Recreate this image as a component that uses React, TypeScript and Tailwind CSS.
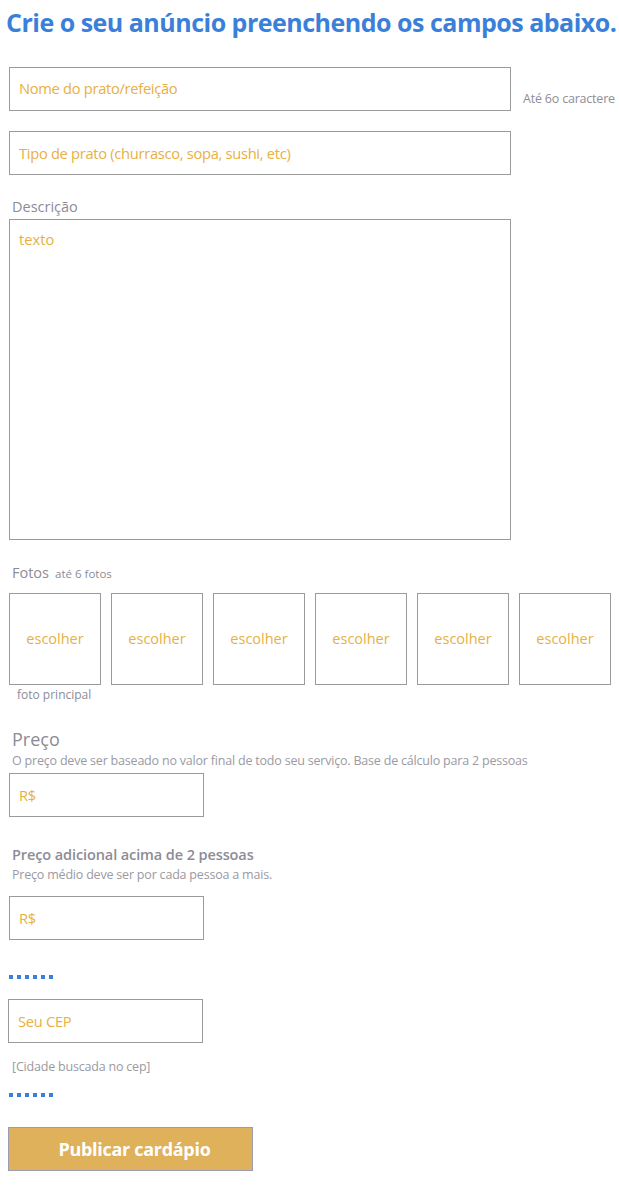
import React from 'react';

const font = { fontFamily: '"Open Sans", "Liberation Sans", sans-serif' };

const Dots: React.FC = () => (
  <div className="flex gap-1 pl-[9px]">
    {[0, 1, 2, 3, 4, 5].map((i) => (
      <div key={i} className="w-1 h-1 bg-[#3b7fd6]" />
    ))}
  </div>
);

const TextInput: React.FC<{ placeholder: string; className?: string }> = ({ placeholder, className }) => (
  <div className={`h-[44px] border border-[#9b9b9b] bg-white flex items-center px-[9px] ${className ?? ''}`}>
    <span className="text-[14.7px] text-[#e8b043] tracking-[-0.3px]">{placeholder}</span>
  </div>
);

export default function App() {
  const photos = [0, 1, 2, 3, 4, 5];

  return (
    <div className="w-[619px] min-h-[1185px] bg-white" style={font}>
      {/* Title */}
      <h1 className="pt-[6px] pl-[6px] text-[25px] font-bold text-[#3b80d8] tracking-[-0.5px] leading-[32px] whitespace-nowrap">
        Crie o seu anúncio preenchendo os campos abaixo.
      </h1>

      {/* Nome */}
      <div className="mt-[29px] flex items-end">
        <TextInput placeholder="Nome do prato/refeição" className="ml-[9px] w-[502px] items-start pt-[9px]" />
        <span className="ml-[12px] mb-[2px] text-[12.5px] text-[#8e8e98] whitespace-nowrap tracking-[-0.2px]">
          Até 6o caractere
        </span>
      </div>

      {/* Tipo */}
      <TextInput
        placeholder="Tipo de prato (churrasco, sopa, sushi, etc)"
        className="mt-[20px] ml-[9px] w-[502px]"
      />

      {/* Descrição */}
      <div className="mt-[22px] pl-[12px] text-[14.5px] text-[#8c8c96] leading-[20px]">Descrição</div>
      <div className="mt-[2px] ml-[9px] w-[502px] h-[321px] border border-[#9b9b9b] px-[9px] pt-[7px]">
        <span className="text-[14.7px] text-[#e8b043]">texto</span>
      </div>

      {/* Fotos */}
      <div className="mt-[23px] pl-[12px] flex items-baseline gap-[6px] leading-[20px]">
        <span className="text-[14.5px] text-[#8c8c96]">Fotos</span>
        <span className="text-[11.5px] text-[#8c8c96]">até 6 fotos</span>
      </div>
      <div className="mt-[9px] pl-[9px] flex gap-[10px]">
        {photos.map((i) => (
          <div key={i} className="w-[92px] h-[92px] border border-[#9b9b9b] flex items-center justify-center">
            <span className="text-[14.5px] text-[#e8b043]">escolher</span>
          </div>
        ))}
      </div>
      <div className="mt-[1px] pl-[17px] text-[12px] text-[#8c8c96] leading-[18px]">foto principal</div>

      {/* Preço */}
      <div className="mt-[23px] pl-[12px] text-[18px] text-[#8c8c96] leading-[24px]">Preço</div>
      <div className="mt-[2px] pl-[12px] text-[12.5px] text-[#9a9aa2] leading-[16px] tracking-[-0.2px] whitespace-nowrap">
        O preço deve ser baseado no valor final de todo seu serviço. Base de cálculo para 2 pessoas
      </div>
      <TextInput placeholder="R$" className="mt-[4px] ml-[9px] w-[195px]" />

      {/* Preço adicional */}
      <div className="mt-[28px] pl-[12px] text-[14.5px] font-semibold text-[#8c8c96] leading-[20px] tracking-[-0.1px]">
        Preço adicional acima de 2 pessoas
      </div>
      <div className="mt-[2px] pl-[12px] text-[12.5px] text-[#9a9aa2] leading-[16px] tracking-[-0.2px]">
        Preço médio deve ser por cada pessoa a mais.
      </div>
      <TextInput placeholder="R$" className="mt-[13px] ml-[9px] w-[195px]" />

      {/* CEP */}
      <div className="mt-[35px]">
        <Dots />
      </div>
      <TextInput placeholder="Seu CEP" className="mt-[20px] ml-[8px] w-[195px]" />
      <div className="mt-[16px] pl-[12px] text-[12.5px] text-[#9a9aa2] leading-[16px] tracking-[-0.2px]">
        [Cidade buscada no cep]
      </div>
      <div className="mt-[18px]">
        <Dots />
      </div>

      {/* Publicar */}
      <button className="mt-[30px] ml-[8px] w-[245px] h-[44px] pl-2 bg-[#dfb15a] border border-[#9d9db2] text-white text-[18px] font-bold tracking-[-0.3px]">
        Publicar cardápio
      </button>
    </div>
  );
}
